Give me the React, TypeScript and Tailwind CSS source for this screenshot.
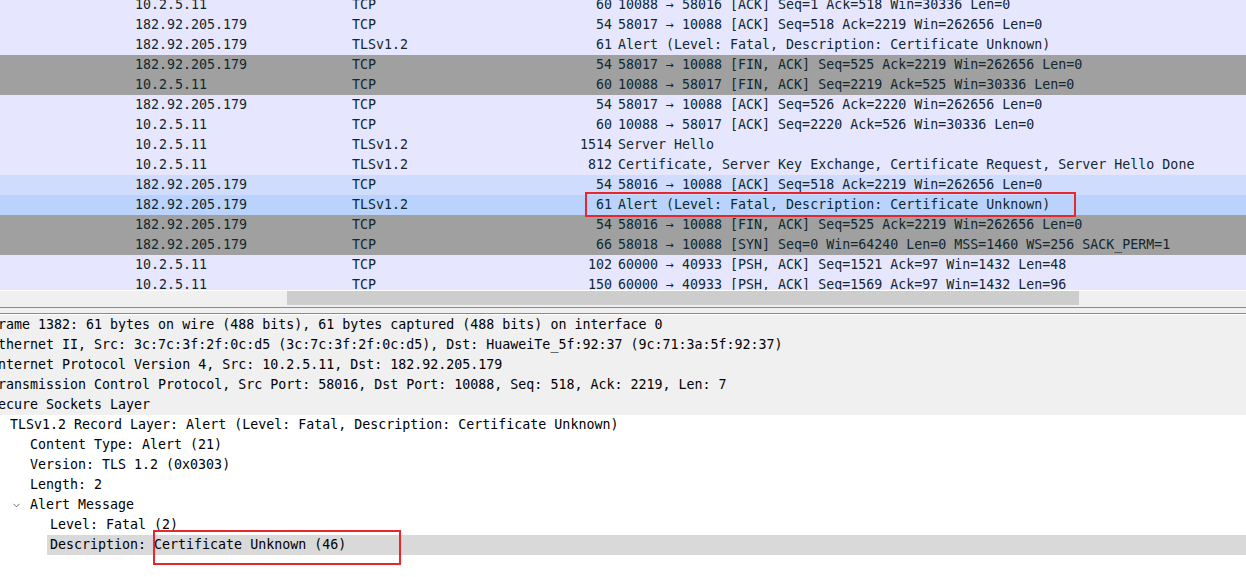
import { ChevronDown } from 'lucide-react'

type Packet = {
  src: string
  proto: string
  len: string
  info: string
  tone: 'tcp' | 'fin' | 'related' | 'selected'
}

const packets: Packet[] = [
  { src: '10.2.5.11', proto: 'TCP', len: '60', info: '10088 → 58016 [ACK] Seq=1 Ack=518 Win=30336 Len=0', tone: 'tcp' },
  { src: '182.92.205.179', proto: 'TCP', len: '54', info: '58017 → 10088 [ACK] Seq=518 Ack=2219 Win=262656 Len=0', tone: 'tcp' },
  { src: '182.92.205.179', proto: 'TLSv1.2', len: '61', info: 'Alert (Level: Fatal, Description: Certificate Unknown)', tone: 'tcp' },
  { src: '182.92.205.179', proto: 'TCP', len: '54', info: '58017 → 10088 [FIN, ACK] Seq=525 Ack=2219 Win=262656 Len=0', tone: 'fin' },
  { src: '10.2.5.11', proto: 'TCP', len: '60', info: '10088 → 58017 [FIN, ACK] Seq=2219 Ack=525 Win=30336 Len=0', tone: 'fin' },
  { src: '182.92.205.179', proto: 'TCP', len: '54', info: '58017 → 10088 [ACK] Seq=526 Ack=2220 Win=262656 Len=0', tone: 'tcp' },
  { src: '10.2.5.11', proto: 'TCP', len: '60', info: '10088 → 58017 [ACK] Seq=2220 Ack=526 Win=30336 Len=0', tone: 'tcp' },
  { src: '10.2.5.11', proto: 'TLSv1.2', len: '1514', info: 'Server Hello', tone: 'tcp' },
  { src: '10.2.5.11', proto: 'TLSv1.2', len: '812', info: 'Certificate, Server Key Exchange, Certificate Request, Server Hello Done', tone: 'tcp' },
  { src: '182.92.205.179', proto: 'TCP', len: '54', info: '58016 → 10088 [ACK] Seq=518 Ack=2219 Win=262656 Len=0', tone: 'related' },
  { src: '182.92.205.179', proto: 'TLSv1.2', len: '61', info: 'Alert (Level: Fatal, Description: Certificate Unknown)', tone: 'selected' },
  { src: '182.92.205.179', proto: 'TCP', len: '54', info: '58016 → 10088 [FIN, ACK] Seq=525 Ack=2219 Win=262656 Len=0', tone: 'fin' },
  { src: '182.92.205.179', proto: 'TCP', len: '66', info: '58018 → 10088 [SYN] Seq=0 Win=64240 Len=0 MSS=1460 WS=256 SACK_PERM=1', tone: 'fin' },
  { src: '10.2.5.11', proto: 'TCP', len: '102', info: '60000 → 40933 [PSH, ACK] Seq=1521 Ack=97 Win=1432 Len=48', tone: 'tcp' },
  { src: '10.2.5.11', proto: 'TCP', len: '150', info: '60000 → 40933 [PSH, ACK] Seq=1569 Ack=97 Win=1432 Len=96', tone: 'tcp' },
]

const toneClass = {
  tcp: 'bg-[#e7e6ff]',
  fin: 'bg-[#a0a0a0]',
  related: 'bg-[#d0dcfd]',
  selected: 'bg-[#b9d3fc]',
}

type Node = {
  text: string
  level: 0 | 1 | 2 | 3
  open?: boolean
  shaded?: boolean
  picked?: boolean
}

const tree: Node[] = [
  { text: 'Frame 1382: 61 bytes on wire (488 bits), 61 bytes captured (488 bits) on interface 0', level: 0, shaded: true },
  { text: 'Ethernet II, Src: 3c:7c:3f:2f:0c:d5 (3c:7c:3f:2f:0c:d5), Dst: HuaweiTe_5f:92:37 (9c:71:3a:5f:92:37)', level: 0, shaded: true },
  { text: 'Internet Protocol Version 4, Src: 10.2.5.11, Dst: 182.92.205.179', level: 0, shaded: true },
  { text: 'Transmission Control Protocol, Src Port: 58016, Dst Port: 10088, Seq: 518, Ack: 2219, Len: 7', level: 0, shaded: true },
  { text: 'Secure Sockets Layer', level: 0, shaded: true },
  { text: 'TLSv1.2 Record Layer: Alert (Level: Fatal, Description: Certificate Unknown)', level: 1, open: true },
  { text: 'Content Type: Alert (21)', level: 2 },
  { text: 'Version: TLS 1.2 (0x0303)', level: 2 },
  { text: 'Length: 2', level: 2 },
  { text: 'Alert Message', level: 2, open: true },
  { text: 'Level: Fatal (2)', level: 3 },
  { text: 'Description: Certificate Unknown (46)', level: 3, picked: true },
]

const indent = {
  0: 'pl-0',
  1: 'pl-[20px]',
  2: 'pl-[40px]',
  3: 'pl-[60px]',
}

const PacketRow = ({ p }: { p: Packet }) => (
  <div className={`relative flex h-[20px] items-center whitespace-nowrap text-[#12272e] ${toneClass[p.tone]}`}>
    <span className="w-[135px] shrink-0" />
    <span className="w-[217px] shrink-0">{p.src}</span>
    <span className="w-[200px] shrink-0">{p.proto}</span>
    <span className="w-[60px] shrink-0 text-right">{p.len}</span>
    <span className="pl-[6px]">{p.info}</span>
    {p.tone === 'selected' && (
      <span className="pointer-events-none absolute left-[585px] top-[-3px] z-10 h-[25px] w-[491px] border-2 border-[#e8272c]" />
    )}
  </div>
)

const TreeRow = ({ n }: { n: Node }) => (
  <div className={`relative flex h-[20px] items-center whitespace-nowrap ${n.shaded ? 'bg-[#f0f0f0]' : 'bg-white'}`}>
    <div className={`relative flex h-full items-center ${indent[n.level]}`}>
      {n.open && (
        <ChevronDown
          size={11}
          strokeWidth={2}
          className="absolute top-[5px] -ml-[19px] text-[#606060]"
        />
      )}
    </div>
    <span className={`flex h-full flex-1 items-center ${n.picked ? '-ml-[3px] bg-[#d9d9d9] pl-[3px]' : ''}`}>
      {n.text}
    </span>
    {n.picked && (
      <span className="pointer-events-none absolute left-[163px] top-[-5px] z-10 h-[35px] w-[248px] border-2 border-[#e8272c]" />
    )}
  </div>
)

export default function App() {
  return (
    <div className="flex h-[577px] w-[1246px] flex-col overflow-hidden bg-white font-['DejaVu_Sans_Mono','Liberation_Mono',monospace] text-[13.3px] leading-none text-black">
      <div className="h-[290px] shrink-0 overflow-hidden">
        <div className="-mt-[5px]">
          {packets.map((p, i) => (
            <PacketRow key={i} p={p} />
          ))}
        </div>
      </div>

      <div className="h-[17px] shrink-0 border-t border-white bg-[#f0f0f0] pl-[287px]">
        <div className="h-[14px] w-[792px] bg-[#cdcdcd]" />
      </div>

      <div className="h-[7px] shrink-0 border-y border-[#8a8a8a] bg-[#f0f0f0]" />

      <div className="flex-1 overflow-hidden bg-white pt-[1px]">
        <div className="-ml-[10px]">
          {tree.map((n, i) => (
            <TreeRow key={i} n={n} />
          ))}
        </div>
      </div>
    </div>
  )
}
